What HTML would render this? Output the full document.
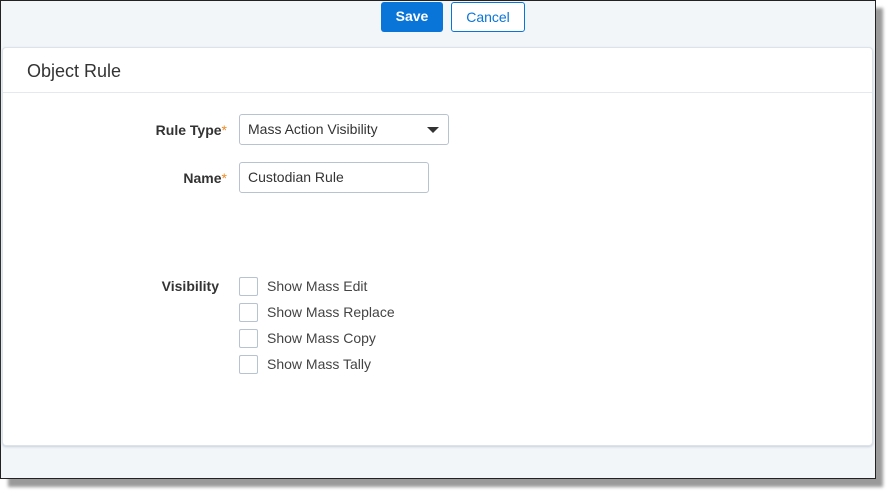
<!DOCTYPE html>
<html><head><style>
body{margin:0;width:890px;height:494px;background:#fff;font-family:"Liberation Sans",sans-serif;position:relative;overflow:hidden}
.sh{position:absolute;left:8px;top:8px;width:875px;height:479px;background:#9a9a9a;filter:blur(1.5px)}
.frame{position:absolute;left:0;top:0;width:874px;height:477px;border:1px solid #222;background:#f2f6f9;box-sizing:content-box}
.btn{position:absolute;top:1px;height:30px;border-radius:3px;font-size:14px;line-height:29px;text-align:center;box-sizing:border-box}
.card{position:absolute;left:1px;top:46px;width:869px;height:397px;background:#fff;border:1px solid #dde3ea;border-radius:4px;box-shadow:0 1px 2px #c8d0da}
.hd{height:44px;border-bottom:1px solid #e4e9ee;font-size:18px;color:#333;line-height:46px;padding-left:24px}
.lbl{position:absolute;font-size:14px;font-weight:bold;color:#333;text-align:right}
.lbl span{color:#f08a24;font-weight:normal}
.inp{position:absolute;left:236px;height:31px;border:1px solid #b7c3d0;border-radius:3px;box-sizing:border-box;font-size:14px;color:#333;line-height:29px;padding-left:8px}
.cb{position:absolute;left:236px;width:17px;height:17px;border:1px solid #b7c3d0;border-radius:2px}
.ct{position:absolute;left:264px;font-size:14px;color:#444}
</style></head><body>
<div class="sh"></div>
<div class="frame">
<div class="btn" style="left:380px;width:62px;background:#0a75d8;color:#fff;font-weight:bold">Save</div>
<div class="btn" style="left:450px;width:74px;background:#fff;border:1px solid #0a75d8;color:#0a75d8">Cancel</div>
<div class="card">
<div class="hd">Object Rule</div>
<div class="lbl" style="left:120px;width:104px;top:74px">Rule Type<span>*</span></div>
<div class="inp" style="top:66px;width:210px">Mass Action Visibility<svg style="position:absolute;right:9px;top:12px" width="12" height="6"><path d="M0 0H12L6 6Z" fill="#333"/></svg></div>
<div class="lbl" style="left:120px;width:104px;top:122px">Name<span>*</span></div>
<div class="inp" style="top:114px;width:190px">Custodian Rule</div>
<div class="lbl" style="left:120px;width:96px;top:230px">Visibility</div>
<div class="cb" style="top:229px"></div><div class="ct" style="top:230px">Show Mass Edit</div>
<div class="cb" style="top:255px"></div><div class="ct" style="top:256px">Show Mass Replace</div>
<div class="cb" style="top:281px"></div><div class="ct" style="top:282px">Show Mass Copy</div>
<div class="cb" style="top:307px"></div><div class="ct" style="top:308px">Show Mass Tally</div>
</div>
</div>
</body></html>
